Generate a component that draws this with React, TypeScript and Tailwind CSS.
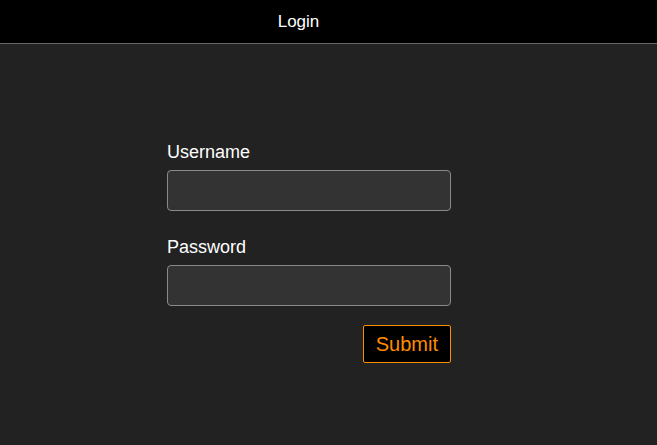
import React from "react";

export default function App() {
  return (
    <div className="w-[657px] h-[445px] bg-[#222222] font-['Liberation_Sans',Arial,sans-serif] overflow-hidden">
      <header className="h-[44px] bg-black border-b border-[#666666] flex items-center justify-center pr-[60px]">
        <span className="text-white text-[17px] leading-none">Login</span>
      </header>
      <form className="pl-[167px] pt-[98px] w-[451px] flex flex-col" onSubmit={(e) => e.preventDefault()}>
        <label className="text-white text-[18px] leading-[21px]">Username</label>
        <input
          type="text"
          className="mt-[7px] h-[41px] w-[284px] rounded-[4px] border border-[#8a8a8a] bg-[#333333] text-white px-2 outline-none"
        />
        <label className="mt-[26px] text-white text-[18px] leading-[21px]">Password</label>
        <input
          type="password"
          className="mt-[7px] h-[41px] w-[284px] rounded-[4px] border border-[#8a8a8a] bg-[#333333] text-white px-2 outline-none"
        />
        <div className="mt-[19px] flex justify-end">
          <button
            type="submit"
            className="h-[38px] px-[12px] rounded-[2px] border border-[#ff8c00] bg-black text-[#ff8c00] text-[20px] leading-none"
          >
            Submit
          </button>
        </div>
      </form>
    </div>
  );
}
